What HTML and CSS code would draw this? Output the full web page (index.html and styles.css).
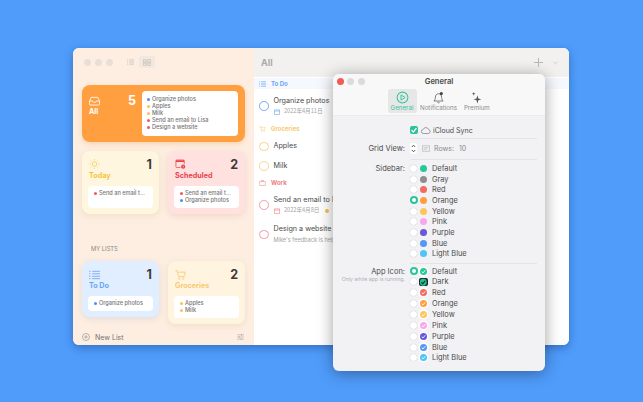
FILE: index.html
```html
<!DOCTYPE html>
<html lang="en">
<head>
  <meta charset="UTF-8" />
  <title>Reminders app settings</title>
  <link rel="stylesheet" href="styles.css">
</head>
<body>
  <div class="window main-window">
    <aside class="sidebar">
      <div class="side-top">
        <span class="light"></span><span class="light"></span><span class="light"></span>
        <svg class="list-icon" viewBox="0 0 10 8"><path d="M3 1h7M3 4h7M3 7h7M0 1h1.400M0 4h1.400M0 7h1.400" stroke="#c2b9b0" stroke-width="1" fill="none"/></svg>
        <span class="view-on"><svg class="view-icon" viewBox="0 0 10 8"><path d="M.5.5h3.600v3H.5zM5.900.5h3.600v3H5.900zM.5 4.600h3.600v3H.5zM5.900 4.600h3.600v3H5.900z" stroke="#bdb3aa" stroke-width=".7" fill="none"/></svg></span>
      </div>

      <div class="card card-all">
        <div class="all-left">
          <div class="card-head">
            <svg class="card-icon" viewBox="0 0 12 10"><path d="M.6 5 2.400 1h7.200l1.800 4v3.600a.8.8 0 0 1-.8.8H1.400a.8.8 0 0 1-.8-.8zM.6 5h3.200l.8 1.400h2.800L8.200 5h3.200" stroke="#fff" stroke-width=".9" fill="none"/></svg>
            <span class="count">5</span>
          </div>
          <div class="card-name">All</div>
        </div>
        <ul class="peek">
          <li class="blue">Organize photos</li>
          <li class="yellow">Apples</li>
          <li class="yellow">Milk</li>
          <li class="red">Send an email to Lisa</li>
          <li class="red">Design a website</li>
        </ul>
      </div>

      <div class="card-row row-top">
        <div class="card card-today">
          <div class="card-head">
            <svg class="card-icon" viewBox="0 0 12 12"><circle cx="6" cy="6" r="2.600" stroke="#f8c545" stroke-width=".8" fill="none"/><path d="M6 0v1.800M6 10.200V12M0 6h1.800M10.200 6H12M1.800 1.800 3 3M9 9l1.200 1.200M1.800 10.200 3 9M9 3l1.200-1.200" stroke="#f8c545" stroke-width=".8"/></svg>
            <span class="count">1</span>
          </div>
          <div class="card-name">Today</div>
          <ul class="peek">
            <li class="red">Send an email t...</li>
          </ul>
        </div>
        <div class="card card-sched">
          <div class="card-head">
            <svg class="card-icon" viewBox="0 0 12 12"><path d="M10.500 6V2.200a1 1 0 0 0-1-1h-8a1 1 0 0 0-1 1v7a1 1 0 0 0 1 1H6" stroke="#e9434a" stroke-width=".9" fill="none"/><path d="M.5 1.500h10v2.200H.5z" fill="#e9434a"/><circle cx="9.200" cy="9.200" r="2.500" fill="#e9434a"/><path d="M9.200 8v1.400l.9.5" stroke="#fff" stroke-width=".6" fill="none"/></svg>
            <span class="count">2</span>
          </div>
          <div class="card-name">Scheduled</div>
          <ul class="peek">
            <li class="red">Send an email t...</li>
            <li class="blue">Organize photos</li>
          </ul>
        </div>
      </div>

      <div class="my-lists">MY LISTS</div>

      <div class="card-row">
        <div class="card card-todo">
          <div class="card-head">
            <svg class="card-icon" viewBox="0 0 12 10"><path d="M3.400 1H12M3.400 3.700H12M3.400 6.400H12M3.400 9H12M0 1h1.600M0 3.700h1.600M0 6.400h1.600M0 9h1.600" stroke="#6aa5f3" stroke-width=".9"/></svg>
            <span class="count">1</span>
          </div>
          <div class="card-name">To Do</div>
          <ul class="peek">
            <li class="blue">Organize photos</li>
          </ul>
        </div>
        <div class="card card-groc">
          <div class="card-head">
            <svg class="card-icon" viewBox="0 0 12 11"><path d="M.4.6h1.800l1.600 6.600h6.200L11.400 2.400H2.800" stroke="#f9ca72" stroke-width=".9" fill="none"/><circle cx="4.600" cy="9.400" r="1" stroke="#f9ca72" stroke-width=".7" fill="none"/><circle cx="9" cy="9.400" r="1" stroke="#f9ca72" stroke-width=".7" fill="none"/></svg>
            <span class="count">2</span>
          </div>
          <div class="card-name">Groceries</div>
          <ul class="peek">
            <li class="yellow">Apples</li>
            <li class="yellow">Milk</li>
          </ul>
        </div>
      </div>

      <div class="side-foot">
        <svg class="new-icon" viewBox="0 0 8 8"><circle cx="4" cy="4" r="3.500" stroke="#8d8a86" stroke-width=".6" fill="none"/><path d="M2.200 4h3.600M4 2.200v3.600" stroke="#8d8a86" stroke-width=".6"/></svg>
        <span class="new-list">New List</span>
        <svg class="sliders" viewBox="0 0 8 7"><path d="M0 1h8M0 3.500h8M0 6h8" stroke="#a19d98" stroke-width=".6"/><path d="M5.200.2v1.600M2.600 2.700v1.600M4.800 5.200v1.600" stroke="#a19d98" stroke-width=".9"/></svg>
      </div>
    </aside>

    <section class="list-pane">
      <header class="list-head">
        <span class="list-title">All</span>
        <svg class="plus" viewBox="0 0 9 9"><path d="M4.500 0v9M0 4.500h9" stroke="#b9b9b9" stroke-width="1"/></svg>
        <svg class="chev" viewBox="0 0 6 4"><path d="M.6.8 3 3l2.400-2.200" stroke="#bcbcbc" stroke-width=".8" fill="none"/></svg>
      </header>
      <div class="list-body">
        <div class="group group-blue">
          <svg class="group-icon" viewBox="0 0 12 10"><path d="M3.400 1H12M3.400 3.700H12M3.400 6.400H12M3.400 9H12M0 1h1.600M0 3.700h1.600M0 6.400h1.600M0 9h1.600" stroke="#6aa5f3" stroke-width="1"/></svg>To Do
        </div>
        <div class="task task-blue">
          <span class="circle"></span>
          <div>
            <div class="task-name">Organize photos</div>
            <div class="task-sub"><svg class="cal" viewBox="0 0 7 7"><path d="M.5 1h6v5.500h-6zM.5 2.400h6" stroke="#6aa5f3" stroke-width=".7" fill="none"/></svg>2022年4月11日</div>
          </div>
        </div>
        <div class="group group-yellow">
          <svg class="group-icon" viewBox="0 0 12 11"><path d="M.4.6h1.800l1.600 6.600h6.200L11.400 2.400H2.800" stroke="#f9ca72" stroke-width="1" fill="none"/><circle cx="4.600" cy="9.400" r="1" fill="#f9ca72"/><circle cx="9" cy="9.400" r="1" fill="#f9ca72"/></svg>Groceries
        </div>
        <div class="task task-yellow single">
          <span class="circle"></span>
          <div class="task-name">Apples</div>
        </div>
        <div class="task task-yellow single">
          <span class="circle"></span>
          <div class="task-name">Milk</div>
        </div>
        <div class="group group-red">
          <svg class="group-icon" viewBox="0 0 12 10"><path d="M1.600 2.600h8.800a1 1 0 0 1 1 1v4.600a1 1 0 0 1-1 1H1.600a1 1 0 0 1-1-1V3.600a1 1 0 0 1 1-1zM4 2.600V.8h4v1.800" stroke="#ee7d83" stroke-width=".9" fill="none"/></svg>Work
        </div>
        <div class="task task-red">
          <span class="circle"></span>
          <div>
            <div class="task-name">Send an email to Lisa</div>
            <div class="task-sub"><svg class="cal" viewBox="0 0 7 7"><path d="M.5 1h6v5.500h-6zM.5 2.400h6" stroke="#ee7d83" stroke-width=".7" fill="none"/></svg>2022年4月8日<span class="flag"></span></div>
          </div>
        </div>
        <div class="task task-red tight">
          <span class="circle"></span>
          <div>
            <div class="task-name">Design a website</div>
            <div class="task-sub note">Mike's feedback is helpful</div>
          </div>
        </div>
      </div>
    </section>
  </div>

  <div class="window settings">
    <div class="settings-top">
      <div class="title-row">
        <div class="lights"><span class="light close"></span><span class="light"></span><span class="light"></span></div>
        <span class="settings-title">General</span>
      </div>
      <div class="tabs">
        <div class="tab tab-on">
          <svg class="tab-icon" viewBox="0 0 14 14"><circle cx="7" cy="7" r="5.800" stroke="#2fc79b" stroke-width="1.100" fill="none"/><path d="M5.400 4.200 9.800 7l-4.400 2.800z" stroke="#2fc79b" stroke-width="1" fill="none"/></svg>
          General
        </div>
        <div class="tab">
          <svg class="tab-icon" viewBox="0 0 14 14"><path d="M2 10.800c1.200-1 1.500-2 1.600-3.800C3.800 4.300 5 3 7 3s3.200 1.300 3.400 4c.1 1.800.4 2.800 1.600 3.800zM5.800 12.200c.6.800 1.800.8 2.400 0" stroke="#555" stroke-width=".8" fill="none"/><circle cx="10" cy="2.800" r="1.700" fill="#444"/></svg>
          Notifications
        </div>
        <div class="tab tab-premium">
          <svg class="tab-icon" viewBox="0 0 14 14"><path d="M8 4.500 9 8l3.200 1L9 10l-1 3.500L7 10 3.800 9 7 8zM4 1l.5 1.500L6 3l-1.500.5L4 5l-.5-1.500L2 3l1.500-.5z" fill="#555"/></svg>
          Premium
        </div>
      </div>
    </div>

    <div class="settings-body">
      <div class="form-row sync-row">
        <span class="form-label"></span>
        <div class="sync">
          <span class="check"><svg viewBox="0 0 8 8"><path d="M1.500 4.200 3.300 6l3.200-3.800" stroke="#fff" stroke-width="1.200" fill="none"/></svg></span>
          <svg class="cloud" viewBox="0 0 10 7"><path d="M2.500 6.500a2 2 0 0 1-.3-4A2.800 2.800 0 0 1 7.500 2.400a2.100 2.100 0 0 1 0 4.100z" stroke="#666" stroke-width=".6" fill="none"/></svg>
          iCloud Sync
        </div>
      </div>
      <div class="rule"></div>
      <div class="form-row grid-row">
        <span class="form-label">Grid View:</span>
        <div class="grid-ctl">
          <svg class="stepper" viewBox="0 0 7 11"><rect width="7" height="11" rx="2" fill="#fff"/><path d="M1.800 4 3.500 2.200 5.200 4M1.800 7l1.700 1.800L5.200 7" stroke="#333" stroke-width=".8" fill="none"/></svg>
          <svg class="rows-icon" viewBox="0 0 10 8"><path d="M.5.500h9v7h-9zM2 3h6M2 5h4" stroke="#999" stroke-width=".6" fill="none"/></svg>
          <span class="rows">Rows:</span><span class="rows">10</span>
        </div>
      </div>
      <div class="rule"></div>

      <div class="form-row options">
        <div class="form-label">Sidebar:</div>
        <div class="opt-list">
          <div class="opt"><span class="radio"></span><span class="dot c-green"></span>Default</div>
          <div class="opt"><span class="radio"></span><span class="dot c-gray"></span>Gray</div>
          <div class="opt"><span class="radio"></span><span class="dot c-red"></span>Red</div>
          <div class="opt"><span class="radio radio-on"></span><span class="dot c-orange"></span>Orange</div>
          <div class="opt"><span class="radio"></span><span class="dot c-yellow"></span>Yellow</div>
          <div class="opt"><span class="radio"></span><span class="dot c-pink"></span>Pink</div>
          <div class="opt"><span class="radio"></span><span class="dot c-purple"></span>Purple</div>
          <div class="opt"><span class="radio"></span><span class="dot c-blue"></span>Blue</div>
          <div class="opt"><span class="radio"></span><span class="dot c-sky"></span>Light Blue</div>
        </div>
      </div>
      <div class="rule"></div>

      <div class="form-row options app-options">
        <div class="form-label">App Icon:<div class="hint">Only while app is running.</div></div>
        <div class="opt-list">
          <div class="opt"><span class="radio radio-on"></span><span class="app c-green"><svg viewBox="0 0 8 8"><path d="M2 4.200 3.500 5.600 6 2.600" stroke="#fff" stroke-width="1" fill="none"/></svg></span>Default</div>
          <div class="opt"><span class="radio"></span><span class="app app-dark"><svg viewBox="0 0 8 8"><circle cx="4" cy="4" r="3.200" fill="#25c08f"/><path d="M2.200 4.100 3.500 5.400 5.800 2.800" stroke="#123" stroke-width="1" fill="none"/></svg></span>Dark</div>
          <div class="opt"><span class="radio"></span><span class="app c-red"><svg viewBox="0 0 8 8"><path d="M2 4.200 3.500 5.600 6 2.600" stroke="#fff" stroke-width="1" fill="none"/></svg></span>Red</div>
          <div class="opt"><span class="radio"></span><span class="app c-orange"><svg viewBox="0 0 8 8"><path d="M2 4.200 3.500 5.600 6 2.600" stroke="#fff" stroke-width="1" fill="none"/></svg></span>Orange</div>
          <div class="opt"><span class="radio"></span><span class="app c-yellow"><svg viewBox="0 0 8 8"><path d="M2 4.200 3.500 5.600 6 2.600" stroke="#fff" stroke-width="1" fill="none"/></svg></span>Yellow</div>
          <div class="opt"><span class="radio"></span><span class="app c-pink"><svg viewBox="0 0 8 8"><path d="M2 4.200 3.500 5.600 6 2.600" stroke="#fff" stroke-width="1" fill="none"/></svg></span>Pink</div>
          <div class="opt"><span class="radio"></span><span class="app c-purple"><svg viewBox="0 0 8 8"><path d="M2 4.200 3.500 5.600 6 2.600" stroke="#fff" stroke-width="1" fill="none"/></svg></span>Purple</div>
          <div class="opt"><span class="radio"></span><span class="app c-blue"><svg viewBox="0 0 8 8"><path d="M2 4.200 3.500 5.600 6 2.600" stroke="#fff" stroke-width="1" fill="none"/></svg></span>Blue</div>
          <div class="opt"><span class="radio"></span><span class="app c-sky"><svg viewBox="0 0 8 8"><path d="M2 4.200 3.500 5.600 6 2.600" stroke="#fff" stroke-width="1" fill="none"/></svg></span>Light Blue</div>
        </div>
      </div>
    </div>
  </div>
</body>
</html>
```

FILE: styles.css
```css
html, body { margin: 0; height: 100%; }
body {
  width: 643px; height: 402px; overflow: hidden; position: relative;
  background: #4f9cfb; color: #3a3a3a;
  font-family: Inter, "Liberation Sans", sans-serif;
}
ul { list-style: none; margin: 0; padding: 0; }
svg { display: block; flex: none; }

/* windows sit on the desktop */
.window { position: absolute; overflow: hidden; border-radius: 6px; }
.main-window {
  left: 73px; top: 48px; width: 496px; height: 297px; display: flex; background: #fff;
  box-shadow: 0 3px 9px rgba(20, 50, 110, .4);
}
.settings {
  left: 333px; top: 74px; width: 212px; height: 297px; display: flex; flex-direction: column;
  background: #f2f2f5; box-shadow: 0 2px 16px rgba(0, 0, 0, .38);
}

/* sidebar */
.sidebar {
  width: 181px; flex: none; box-sizing: border-box; padding: 0 9px; display: flex; flex-direction: column;
  background: #fdeee1;
}
.side-top { height: 37px; box-sizing: border-box; padding: 0 0 9px 2px; display: flex; align-items: center; gap: 4px; }
.light { width: 7px; height: 7px; border-radius: 50%; background: #e8dfd6; flex: none; }
.list-icon { width: 7px; height: 6px; margin-left: 10px; }
.view-icon { width: 8px; height: 7px; }
.view-on { margin-left: 1px; padding: 2.500px 4px; background: #f1e8df; border-radius: 3px; }

.card { border-radius: 8px; box-sizing: border-box; width: 77px; padding: 7px 6px 6px; display: flex; flex-direction: column; }
.card-all {
  width: 163px; height: 56.500px; flex-direction: row; gap: 6px; padding: 6px 7px; background: #ff9f40;
  box-shadow: 0 2px 5px rgba(240, 150, 60, .3);
}
.all-left { width: 47px; flex: none; padding-top: 3px; }
.card-head { height: 13px; margin: 0 1px; display: flex; justify-content: space-between; align-items: center; }
.card-all .card-head { margin: 0; }
.card-icon { width: 11px; height: 10px; }
.count { font-size: 12.500px; font-weight: 700; line-height: 13px; }
.card .count { color: #3a3a3a; }
.card-all .count, .card-all .card-name { color: #fff; }
.card-name { margin: 0 1px 5px; font-size: 7.200px; font-weight: 700; line-height: 10px; }
.card-all .card-name { margin: 0; }

.peek {
  flex: 1; background: #fff; border-radius: 4px; padding: 4px 6px;
  font-size: 5.600px; font-weight: 500; color: #757575; line-height: 7px;
}
.card-all .peek { padding: 0 5px; display: flex; flex-direction: column; justify-content: center; }
.peek li { display: flex; align-items: center; gap: 2px; white-space: nowrap; }
.peek li::before { content: ""; width: 3px; height: 3px; border-radius: 50%; flex: none; }
.peek li.blue::before { background: #4d93ee; }
.peek li.yellow::before { background: #f8c25c; }
.peek li.red::before { background: #ee5b63; }

.card-row { display: flex; align-items: flex-start; gap: 9px; }
.row-top { margin-top: 9px; align-items: stretch; }
.card-today { background: #fff6df; color: #f8c33c; box-shadow: 0 2px 6px rgba(200, 170, 110, .22); }
.card-sched { background: #ffe1e0; color: #e9434a; box-shadow: 0 2px 6px rgba(220, 140, 130, .25); }
.card-todo { background: #e0eeff; color: #6aa5f3; box-shadow: 0 2px 6px rgba(130, 160, 210, .22); }
.card-groc { background: #fff4df; color: #f9ca72; box-shadow: 0 2px 6px rgba(200, 170, 110, .22); }

.my-lists { margin: 31px 0 8.500px 9px; font-size: 5.800px; line-height: 8px; color: #8b8782; }
.side-foot { margin-top: auto; height: 16px; display: flex; align-items: center; gap: 4px; }
.new-icon { width: 8px; height: 8px; }
.new-list { margin-left: 1px; font-size: 7px; color: #76736f; }
.sliders { width: 7px; height: 6px; margin-left: auto; margin-right: 1px; }

/* task list */
.list-pane { flex: 1; min-width: 0; display: flex; flex-direction: column; background: #fff; }
.list-head { height: 29px; flex: none; display: flex; align-items: center; padding: 0 11px 0 7px; background: #f2f1f0; }
.list-title { font-size: 9px; font-weight: 700; color: #a9a9a9; }
.plus { width: 9px; height: 9px; margin-left: auto; margin-right: 10px; }
.chev { width: 5px; height: 4px; }
.list-body { flex: 1; padding-top: 1px; white-space: nowrap; }
.group { height: 11px; display: flex; align-items: center; gap: 5px; padding-left: 5px; font-size: 6px; font-weight: 700; }
.group-icon { width: 7px; height: 6px; }
.group-blue { color: #6aa5f3; background: #f5f9fe; }
.group-yellow { color: #f9ca72; margin-bottom: 2.500px; }
.group-red { color: #ee7d83; margin-top: 1.700px; }
.task { display: flex; align-items: center; gap: 5px; padding-left: 5px; height: 34px; }
.task.single { height: 19.500px; }
.task.tight { height: 25px; }
.circle { width: 9.500px; height: 9.500px; border-radius: 50%; flex: none; border: 1px solid currentColor; box-sizing: border-box; }
.task-blue .circle { color: #78a9ec; }
.task-yellow .circle { color: #f6d38d; }
.task-red .circle { color: #ef9ba0; }
.task-name { font-size: 7.200px; line-height: 10px; color: #4a4a4a; }
.task-sub { display: flex; align-items: center; gap: 4.500px; font-size: 5.600px; line-height: 9px; margin-top: 1.500px; color: #a3a3a3; font-family: "Noto Sans CJK JP", Inter, sans-serif; }
.task-sub.note { font-family: Inter, sans-serif; }
.cal { width: 6px; height: 6px; }
.flag { width: 4px; height: 4px; border-radius: 50%; background: #f6c24c; margin-left: 1px; }

/* settings panel */
.settings-top { height: 42px; flex: none; background: #f8f8f9; border-bottom: 1px solid #ebebed; box-sizing: border-box; }
.title-row { height: 15px; display: grid; grid-template-columns: 1fr auto 1fr; align-items: center; }
.lights { display: flex; gap: 3.700px; padding-left: 3.500px; }
.settings .light { background: #dbdbdd; }
.settings .light.close { background: #f25c55; }
.settings-title { font-size: 7.600px; font-weight: 600; line-height: 10px; color: #4a4a4a; }
.tabs { display: flex; gap: 3.500px; padding-left: 54.500px; }
.tab {
  height: 24px; border-radius: 3px; display: flex; flex-direction: column; align-items: center;
  font-size: 6.200px; line-height: 7px; color: #8a8a8a; white-space: nowrap; padding-top: 2px; box-sizing: border-box;
}
.tab-on { width: 29px; background: #e7e7e8; color: #39c29a; }
.tab-premium { margin-left: 3.500px; }
.tab-icon { width: 13px; height: 13px; }

.settings-body { flex: 1; min-height: 0; }
.rule { height: 1px; margin: 0 8px 0 77px; background: #e4e4e7; }
.form-row { display: grid; grid-template-columns: 72px 1fr; column-gap: 5px; }
.form-label { text-align: right; font-size: 7.500px; color: #4a4a4a; line-height: 11px; }
.sync-row { height: 22px; box-sizing: border-box; padding-top: 6px; align-items: center; }
.sync { display: flex; align-items: center; gap: 2.500px; font-size: 7px; color: #4a4a4a; }
.check { width: 8px; height: 8px; border-radius: 2px; background: #2cc39a; }
.check svg { width: 8px; height: 8px; }
.cloud { width: 10px; height: 7px; }
.grid-row { height: 20px; box-sizing: border-box; padding-bottom: 1.500px; align-items: center; }
.grid-ctl { display: flex; align-items: center; gap: 4px; font-size: 7px; color: #8a8a8a; }
.stepper { width: 7px; height: 11px; }
.rows-icon { width: 8px; height: 7px; margin-left: 1px; }
.rows + .rows { margin-left: 1px; }

.options { padding: 3px 0 3.500px; }
.app-options { padding: 2px 0 0; }
.hint { font-size: 5.200px; line-height: 5px; color: #b0b0b3; white-space: nowrap; }
.opt-list { display: flex; flex-direction: column; }
.opt { height: 10.700px; display: flex; align-items: center; font-size: 7.400px; color: #4a4a4a; }
.app-options .opt { height: 10.850px; }
.radio { width: 7px; height: 7px; border-radius: 50%; background: #fff; box-shadow: 0 0 1px rgba(0, 0, 0, .3); margin-right: 3px; flex: none; box-sizing: border-box; }
.radio-on { width: 8px; height: 8px; margin: 0 2.500px 0 -.5px; border: 2px solid #2cc39a; box-shadow: none; }
.dot { width: 7px; height: 7px; border-radius: 50%; margin-right: 5px; flex: none; }
.app { width: 7px; height: 7px; border-radius: 50%; margin-right: 5px; flex: none; box-shadow: 0 0 0 1.500px #fff; }
.app svg { width: 7px; height: 7px; }
.app-dark { width: 8.500px; height: 8.500px; margin: 0 4.200px 0 -.7px; border-radius: 2px; background: #123028; box-shadow: none; }
.app-dark svg { width: 8.500px; height: 8.500px; }
.c-green { background: #27c796; }
.c-gray { background: #8e8e8e; }
.c-red { background: #f46a62; }
.c-orange { background: #ff9f40; }
.c-yellow { background: #fcc65c; }
.c-pink { background: #f8a7ee; }
.c-purple { background: #6a56d8; }
.c-blue { background: #5597f5; }
.c-sky { background: #4fc4f7; }
```
